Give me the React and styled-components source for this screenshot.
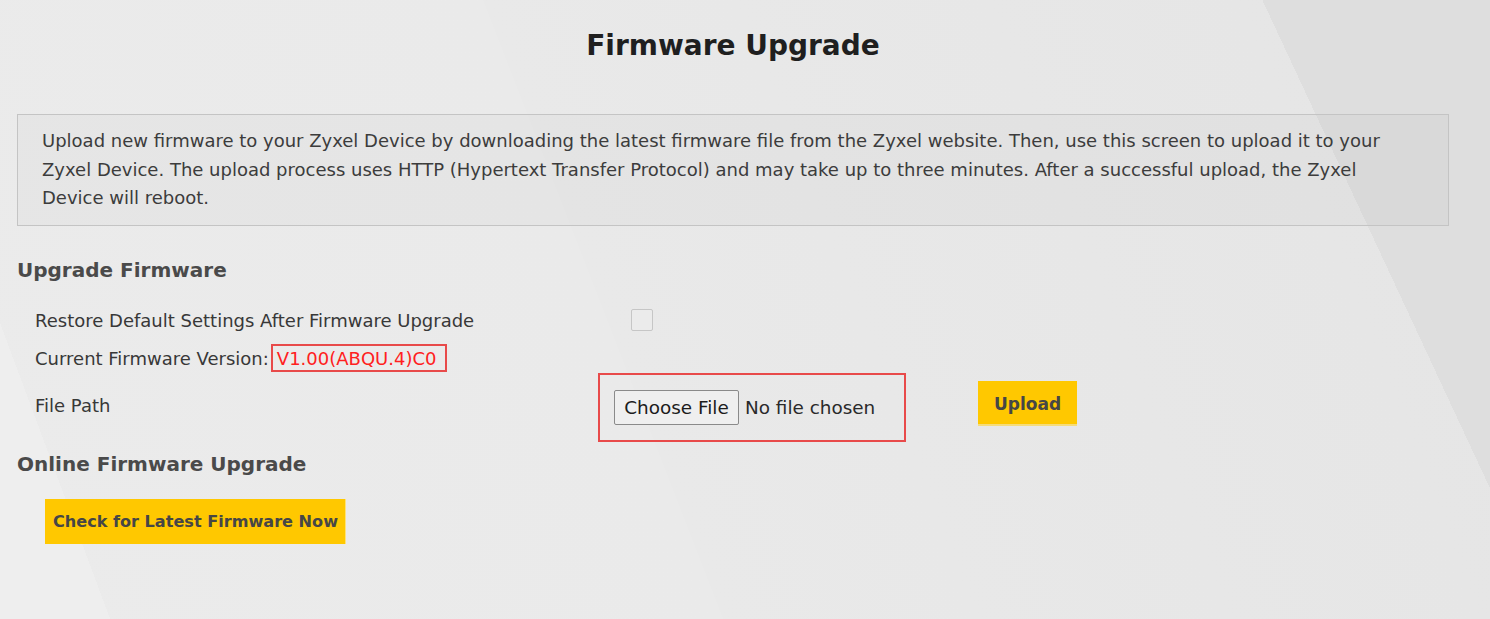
import React from "react";
import styled, { createGlobalStyle } from "styled-components";

const Global = createGlobalStyle`
  html, body { margin: 0; padding: 0; }
  body {
    min-height: 100vh;
    font-family: "DejaVu Sans", "Liberation Sans", sans-serif;
    color: #3a3a3a;
    background-color: #e7e7e7;
    background-image:
      linear-gradient(69.6deg, #eeeeee 6.4%, transparent 6.4%),
      linear-gradient(65deg, transparent 87.2%, #dedede 87.2%),
      linear-gradient(68.8deg, #ebebeb 0%, #eaeaea 41.8%, #e9e9e9 41.8%, #e5e5e5 100%);
    background-attachment: fixed;
  }
`;

const Page = styled.main`
  width: 1432px;
  padding: 0 0 40px 17px;
  box-sizing: content-box;
`;

const Title = styled.h1`
  margin: 0;
  padding-top: 29px;
  height: 114px;
  box-sizing: border-box;
  text-align: center;
  font-size: 28px;
  font-weight: bold;
  color: #1f1f1f;
`;

const InfoBox = styled.div`
  border: 1px solid #c4c4c4;
  background: rgba(0, 0, 0, 0.018);
  padding: 12px 24px;
  height: 112px;
  box-sizing: border-box;
  font-size: 18px;
  line-height: 28.5px;
  color: #3c3c3c;
  white-space: nowrap;
`;

const SectionTitle = styled.h2`
  margin: ${(p) => p.$top}px 0 0 0;
  font-size: 20px;
  font-weight: bold;
  color: #4a4a4a;
  line-height: 30px;
`;

const Rows = styled.div`
  display: flex;
  flex-direction: column;
  padding-left: 18px;
  margin-top: 24px;
`;

const Row = styled.div`
  display: grid;
  grid-template-columns: 563px max-content max-content;
  justify-content: start;
  align-items: center;
  height: ${(p) => p.$h}px;
  margin-top: ${(p) => p.$gap || 0}px;
`;

const Label = styled.div`
  font-size: 18px;
  color: #383838;
  display: flex;
  align-items: center;
  white-space: nowrap;
`;

const Checkbox = styled.span`
  display: block;
  width: 22px;
  height: 22px;
  box-sizing: border-box;
  margin-left: 33px;
  border: 1.5px solid #c6c6c6;
  border-radius: 2px;
  background: #ebebeb;
`;

const Version = styled.span`
  display: inline-block;
  margin-left: 2px;
  padding: 0 9px 0 4px;
  height: 28px;
  line-height: 25px;
  box-sizing: border-box;
  border: 2px solid #e84a4a;
  color: #ff2020;
`;

const FileBox = styled.div`
  width: 308px;
  height: 69px;
  box-sizing: border-box;
  border: 2px solid #e84a4a;
  display: flex;
  align-items: center;
  padding-left: 14px;
  gap: 6px;
`;

const FileButton = styled.button`
  height: 35px;
  width: 125px;
  box-sizing: border-box;
  border: 1px solid #8a8a8a;
  border-radius: 2px;
  background: #efefef;
  font-family: inherit;
  font-size: 18.4px;
  color: #1c1c1c;
  padding: 0;
  white-space: nowrap;
`;

const FileText = styled.span`
  font-size: 18.4px;
  color: #2a2a2a;
  white-space: nowrap;
`;

const YellowButton = styled.button`
  height: 45px;
  width: ${(p) => p.$w}px;
  box-sizing: border-box;
  border: none;
  background: #ffc800;
  font-family: inherit;
  font-size: ${(p) => p.$fs || 17}px;
  font-weight: bold;
  color: #464646;
  padding: 0;
  white-space: nowrap;
  box-shadow: ${(p) => p.$shadow};
`;

const UploadButton = styled(YellowButton)`
  align-self: start;
  margin-top: 8px;
  margin-left: 72px;
`;

const FileLabel = styled(Label)`
  padding-bottom: 5px;
`;

const OnlineWrap = styled.div`
  padding-left: 28px;
  margin-top: 20px;
`;

export default function App() {
  return (
    <>
      <Global />
      <Page>
        <Title>Firmware Upgrade</Title>
        <InfoBox>
          Upload new firmware to your Zyxel Device by downloading the latest firmware file from the Zyxel website. Then, use this screen to upload it to your
          <br />
          Zyxel Device. The upload process uses HTTP (Hypertext Transfer Protocol) and may take up to three minutes. After a successful upload, the Zyxel
          <br />
          Device will reboot.
        </InfoBox>
        <SectionTitle $top={29}>Upgrade Firmware</SectionTitle>
        <Rows>
          <Row $h={22}>
            <Label>Restore Default Settings After Firmware Upgrade</Label>
            <Checkbox role="checkbox" aria-checked="false" />
          </Row>
          <Row $h={28} $gap={13}>
            <Label>
              Current Firmware Version:<Version>V1.00(ABQU.4)C0</Version>
            </Label>
          </Row>
          <Row $h={69} $gap={1}>
            <FileLabel>File Path</FileLabel>
            <FileBox>
              <FileButton type="button">Choose File</FileButton>
              <FileText>No file chosen</FileText>
            </FileBox>
            <UploadButton type="button" $w={99} $shadow="inset 0 -2px 0 #f5dc7a">
              Upload
            </UploadButton>
          </Row>
        </Rows>
        <SectionTitle $top={7}>Online Firmware Upgrade</SectionTitle>
        <OnlineWrap>
          <YellowButton type="button" $w={301} $fs={16.1} $shadow="inset -1px 0 0 #ffe27a">
            Check for Latest Firmware Now
          </YellowButton>
        </OnlineWrap>
      </Page>
    </>
  );
}
